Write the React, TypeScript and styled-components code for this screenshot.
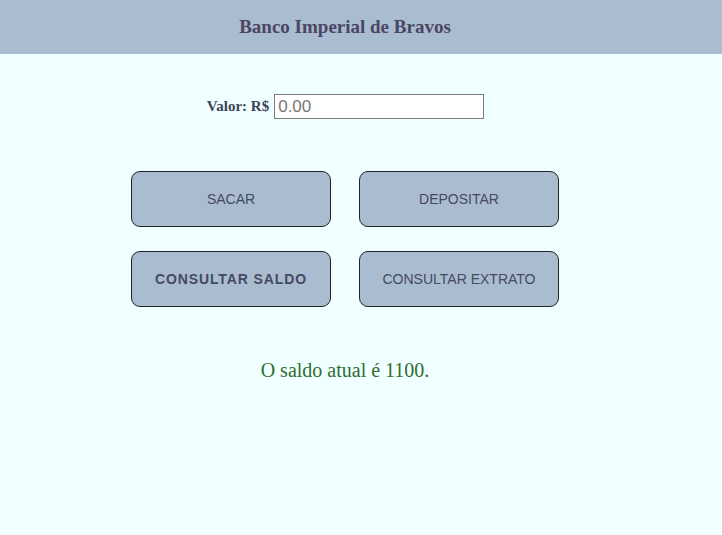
import React from "react";
import styled, { createGlobalStyle } from "styled-components";

const Global = createGlobalStyle`
  html, body { margin: 0; padding: 0; background: #f0ffff; }
  body { font-family: "Liberation Serif", "Times New Roman", serif; }
`;

const Page = styled.div`
  width: 690px;
  min-height: 535px;
`;

const Header = styled.header`
  height: 54px;
  width: 722px;
  background: #aabccf;
  display: flex;
  align-items: center;
`;

const Title = styled.h1`
  width: 690px;
  margin: 0;
  text-align: center;
  font-size: 19px;
  font-weight: bold;
  color: #4a4664;
  font-family: "Liberation Serif", serif;
`;

const ValueRow = styled.div`
  display: flex;
  justify-content: center;
  align-items: center;
  gap: 5px;
  margin-top: 40px;
  padding-left: 1px;
`;

const Label = styled.label`
  font-size: 15px;
  font-weight: bold;
  color: #3e4459;
  font-family: "Liberation Serif", serif;
`;

const Input = styled.input`
  box-sizing: border-box;
  width: 210px;
  height: 25px;
  border: 1px solid #7a7a7a;
  background: #fff;
  padding: 0 3px;
  font-family: "Liberation Sans", Arial, sans-serif;
  font-size: 17px;
  color: #666;
  outline: none;
  &::placeholder { color: #777; }
`;

const Grid = styled.div`
  display: grid;
  grid-template-columns: 200px 200px;
  column-gap: 28px;
  row-gap: 24px;
  justify-content: center;
  margin-top: 52px;
`;

const Button = styled.button<{ $bold?: boolean }>`
  box-sizing: border-box;
  height: 56px;
  border: 1px solid #222;
  border-radius: 9px;
  background: #aabccf;
  color: #454a62;
  font-family: "Liberation Sans", Arial, sans-serif;
  font-size: 14px;
  font-weight: ${(p) => (p.$bold ? "bold" : "normal")};
  letter-spacing: ${(p) => (p.$bold ? "0.9px" : "0")};
  cursor: pointer;
`;

const Result = styled.p`
  margin: 52px 0 0;
  text-align: center;
  font-size: 20px;
  color: #2e6e2e;
  font-family: "Liberation Serif", serif;
`;

export default function App() {
  return (
    <>
      <Global />
      <Page>
        <Header>
          <Title>Banco Imperial de Bravos</Title>
        </Header>
        <ValueRow>
          <Label htmlFor="valor">Valor: R$</Label>
          <Input id="valor" placeholder="0.00" />
        </ValueRow>
        <Grid>
          <Button>SACAR</Button>
          <Button>DEPOSITAR</Button>
          <Button $bold>CONSULTAR SALDO</Button>
          <Button>CONSULTAR EXTRATO</Button>
        </Grid>
        <Result>O saldo atual é 1100.</Result>
      </Page>
    </>
  );
}
